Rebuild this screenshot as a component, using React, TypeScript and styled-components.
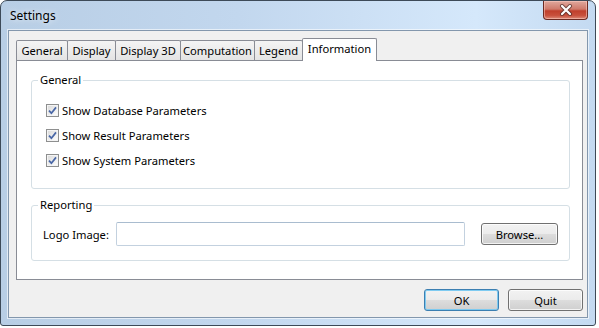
import styled, { createGlobalStyle } from "styled-components";

const GlobalStyle = createGlobalStyle`
  body {
    margin: 0;
    background: #ffffff;
    font-family: "Noto Sans", "Open Sans", sans-serif;
    font-size: 11.2px;
    color: #000;
  }
`;

const Window = styled.div`
  box-sizing: border-box;
  width: 596px;
  height: 326px;
  border: 1px solid #3d4a58;
  border-radius: 7px 7px 3px 3px;
  padding: 0 7px 7px;
  display: flex;
  flex-direction: column;
  background: linear-gradient(
    to right,
    #b8cee5 0%,
    #c2d7ee 40%,
    #d5e8fb 80%,
    #c4daf1 100%
  );
`;

const TitleBar = styled.div`
  height: 29px;
  display: flex;
  align-items: flex-start;
  justify-content: space-between;
`;

const Title = styled.span`
  padding: 7px 0 0 2px;
  font-size: 12px;
  line-height: 16px;
  text-shadow: 0 0 6px rgba(255, 255, 255, 0.9);
`;

const CloseButton = styled.div`
  width: 45px;
  height: 19px;
  box-sizing: border-box;
  border: 1px solid #6b2a22;
  border-top: none;
  border-radius: 0 0 4px 4px;
  display: flex;
  align-items: center;
  justify-content: center;
  background: linear-gradient(
    #e0a89d 0%,
    #cf7a6b 45%,
    #c03f2c 55%,
    #c8503c 80%,
    #dc8a78 100%
  );
  box-shadow: inset 0 0 0 1px rgba(255, 210, 200, 0.5);
`;

const Client = styled.div`
  flex: 1;
  display: flex;
  flex-direction: column;
  border: 1px solid #8397ad;
  background: #f0f0f0;
  padding: 7px 4px 0 7px;
  box-shadow: 0 0 0 1px rgba(255, 255, 255, 0.6);
`;

const TabStrip = styled.div`
  display: flex;
  align-items: flex-end;
  position: relative;
  z-index: 1;
`;

const Tab = styled.div<{ $w: number; $active?: boolean }>`
  box-sizing: border-box;
  width: ${(p) => p.$w}px;
  height: ${(p) => (p.$active ? 23 : 20)}px;
  margin-bottom: ${(p) => (p.$active ? -1 : 0)}px;
  margin-left: -1px;
  &:first-child {
    margin-left: 0;
  }
  border: 1px solid #898c95;
  border-bottom: none;
  border-radius: 2px 2px 0 0;
  background: ${(p) =>
    p.$active ? "#ffffff" : "linear-gradient(#f4f4f4, #e4e4e4)"};
  position: relative;
  z-index: ${(p) => (p.$active ? 2 : 1)};
  display: flex;
  align-items: center;
  justify-content: center;
  padding-bottom: ${(p) => (p.$active ? 2 : 0)}px;
  line-height: 16px;
  white-space: nowrap;
`;

const Panel = styled.div`
  box-sizing: border-box;
  height: 220px;
  border: 1px solid #898c95;
  background: #ffffff;
  padding: 0 12px 0 14px;
  display: flex;
  flex-direction: column;
`;

const Group = styled.fieldset<{ $top: number; $pt: number; $pb: number }>`
  margin: ${(p) => p.$top}px 0 0;
  padding: ${(p) => p.$pt}px 11px ${(p) => p.$pb}px;
  border: 1px solid #d5dfe5;
  border-radius: 3px;
  min-width: 0;
`;

const Legend = styled.legend`
  margin-left: -5px;
  padding: 0 2px;
  line-height: 16px;
`;

const CheckRow = styled.label`
  height: 25px;
  display: flex;
  align-items: center;
  gap: 3px;
  padding-left: 3px;
`;

const Box = styled.span`
  box-sizing: border-box;
  width: 13px;
  height: 13px;
  border: 1px solid #8e8f8f;
  background: linear-gradient(135deg, #d8d8d8, #ffffff);
  box-shadow: inset 0 0 0 1px #f4f4f4;
  display: flex;
  align-items: center;
  justify-content: center;
`;

const FieldRow = styled.div`
  height: 24px;
  display: flex;
  align-items: center;
`;

const FieldLabel = styled.span`
  width: 73px;
`;

const TextBox = styled.div`
  box-sizing: border-box;
  width: 349px;
  height: 24px;
  border: 1px solid #c3d1df;
  border-top-color: #a9bccf;
  border-radius: 2px;
  background: #fff;
  margin-right: 16px;
`;

const Button = styled.button<{ $w: number; $default?: boolean }>`
  box-sizing: border-box;
  width: ${(p) => p.$w}px;
  height: 22px;
  padding: 0;
  font: inherit;
  color: #000;
  border: 1px solid ${(p) => (p.$default ? "#3c7fb1" : "#707070")};
  border-radius: 3px;
  background: linear-gradient(
    #f2f2f2 0%,
    #ebebeb 50%,
    #dddddd 51%,
    #cfcfcf 100%
  );
  box-shadow: inset 0 0 0 1px
    ${(p) => (p.$default ? "rgba(120, 200, 240, 0.95)" : "rgba(255,255,255,0.75)")};
`;

const Footer = styled.div`
  margin-top: 9px;
  display: flex;
  justify-content: flex-end;
  gap: 9px;
`;

const Check = () => (
  <Box>
    <svg width="9" height="9" viewBox="0 0 9 9">
      <path
        d="M1 4.6 L3.4 7.2 L8 1.4"
        fill="none"
        stroke="#4866a6"
        strokeWidth="1.7"
      />
    </svg>
  </Box>
);

const tabs = [
  { label: "General", w: 52 },
  { label: "Display", w: 49 },
  { label: "Display 3D", w: 66 },
  { label: "Computation", w: 75 },
  { label: "Legend", w: 49 },
  { label: "Information", w: 75, active: true },
];

const options = [
  "Show Database Parameters",
  "Show Result Parameters",
  "Show System Parameters",
];

export default function App() {
  return (
    <>
      <GlobalStyle />
      <Window>
        <TitleBar>
          <Title>Settings</Title>
          <CloseButton>
            <svg width="14" height="12" viewBox="0 0 14 12">
              <path
                d="M3 2 L11 10 M11 2 L3 10"
                stroke="#4a2a26"
                strokeWidth="4"
                strokeLinecap="round"
                opacity="0.7"
              />
              <path
                d="M3 2 L11 10 M11 2 L3 10"
                stroke="#ffffff"
                strokeWidth="2.2"
                strokeLinecap="round"
              />
            </svg>
          </CloseButton>
        </TitleBar>
        <Client>
          <TabStrip>
            {tabs.map((t) => (
              <Tab key={t.label} $w={t.w} $active={t.active}>
                {t.label}
              </Tab>
            ))}
          </TabStrip>
          <Panel>
            <Group $top={11} $pt={10} $pb={15}>
              <Legend>General</Legend>
              {options.map((o) => (
                <CheckRow key={o}>
                  <Check />
                  {o}
                </CheckRow>
              ))}
            </Group>
            <Group $top={8} $pt={9} $pb={14}>
              <Legend>Reporting</Legend>
              <FieldRow>
                <FieldLabel>Logo Image:</FieldLabel>
                <TextBox />
                <Button $w={77}>Browse...</Button>
              </FieldRow>
            </Group>
          </Panel>
          <Footer>
            <Button $w={75} $default>
              OK
            </Button>
            <Button $w={75}>Quit</Button>
          </Footer>
        </Client>
      </Window>
    </>
  );
}
